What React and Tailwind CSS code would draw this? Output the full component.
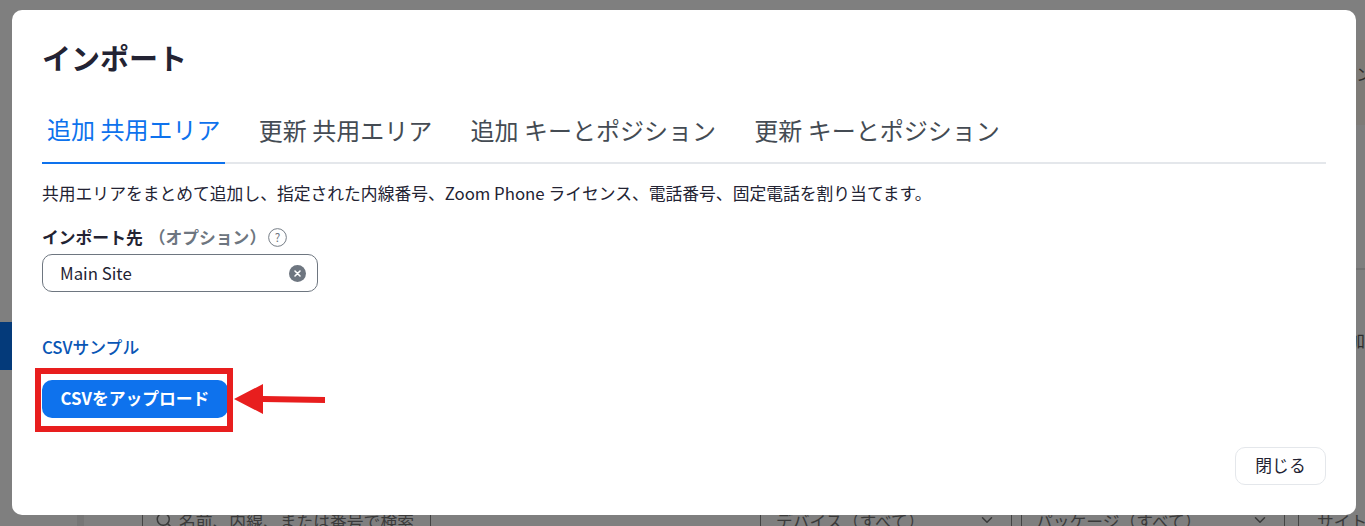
import React, { useState } from 'react';
import { Search, ChevronDown } from 'lucide-react';

const font = "font-['Noto_Sans_CJK_JP','Noto_Sans',sans-serif]";
const tabs = ['追加 共用エリア', '更新 共用エリア', '追加 キーとポジション', '更新 キーとポジション'];

// page behind the dialog, only its edges stay visible
const BackgroundPage = () => (
  <div className="flex flex-col h-full text-[#2e2e2e] text-[16.8px]">
    <div className="h-[40px]" />
    <div className="h-[85px] w-[9px] self-end bg-[#7e7b77] flex items-center pb-[18px]">
      <span className="leading-[24px] whitespace-nowrap">ン</span>
    </div>
    <div className="h-[143px]" />
    <div className="h-[2px] w-[9px] self-end bg-[#727272]" />
    <div className="h-[52px]" />
    <div className="flex h-[48px]">
      <div className="w-[12px] bg-[#043a7a]" />
      <div className="flex-1 flex justify-end items-center pb-[12px]">
        <span className="leading-[24px]">加</span>
      </div>
    </div>
    <div className="flex-1 flex items-end pl-[77px] overflow-hidden text-[#3a3a3a]">
      <div className="w-[7px] h-[11px] bg-[#767676] shrink-0" />
      <div className="ml-[58px] w-[289px] h-[26px] shrink-0 border-x border-[#444] pl-[12px] flex gap-[6px] self-end">
        <Search size={18} className="shrink-0 mt-[11px]" />
        <span className="mt-[9px] leading-[24px] whitespace-nowrap">名前、内線、または番号で検索</span>
      </div>
      <div className="ml-[329px] w-[252px] h-[26px] shrink-0 border-x border-[#444] pl-[15px] pr-[15px] flex justify-between">
        <span className="mt-[9px] leading-[24px] whitespace-nowrap">デバイス（すべて）</span>
        <ChevronDown size={18} className="mt-[11px]" />
      </div>
      <div className="ml-[9px] w-[264px] h-[26px] shrink-0 border-x border-[#444] pl-[14px] pr-[15px] flex justify-between">
        <span className="mt-[9px] leading-[24px] whitespace-nowrap">パッケージ（すべて）</span>
        <ChevronDown size={18} className="mt-[11px]" />
      </div>
      <div className="ml-[13px] h-[26px] shrink-0 border-l border-[#444] pl-[18px]">
        <span className="block mt-[9px] leading-[24px] whitespace-nowrap">サイト</span>
      </div>
    </div>
  </div>
);

export default function App() {
  const [active, setActive] = useState(0);
  const [site, setSite] = useState('Main Site');

  return (
    <div className={`relative h-[526px] w-full overflow-hidden bg-[#7f7f7f] ${font}`}>
      <BackgroundPage />

      <div className="absolute left-[12px] top-[10px] w-[1344px] h-[505px] rounded-[10px] bg-white flex flex-col px-[30px]">
        <h1 className="mt-[27px] text-[29px] leading-[40px] font-bold text-[#232333]">インポート</h1>

        <div className="mt-[24px] flex border-b-2 border-[#e4e7eb] gap-[28.4px] h-[63px]">
          {tabs.map((t, i) => (
            <button
              key={t}
              onClick={() => setActive(i)}
              className={`px-[5px] -mb-[2px] h-[63px] text-[24px] leading-[36px] pb-[6px] whitespace-nowrap ${
                i === active ? 'text-[#0e72ed] border-b-2 border-[#0e72ed]' : 'text-[#444b53]'
              }`}
            >
              {t}
            </button>
          ))}
        </div>

        <p className="mt-[17px] text-[16.8px] leading-[24px] text-[#232333] whitespace-nowrap">
          共用エリアをまとめて追加し、指定された内線番号、Zoom Phone ライセンス、電話番号、固定電話を割り当てます。
        </p>

        <div className="mt-[20px] flex items-center text-[16.8px] leading-[24px] font-bold text-[#232333]">
          インポート先
          <span className="ml-[6px] text-[#6e7680]">（オプション）</span>
          <svg width="19" height="19" viewBox="0 0 18 18" className="ml-[2px]" fill="none">
            <circle cx="9" cy="9" r="8.4" stroke="#6e7680" strokeWidth="0.9" />
            <text x="9" y="13" textAnchor="middle" fontSize="11" fontWeight="400" fill="#6e7680">?</text>
          </svg>
        </div>

        <div className="mt-[5px] flex items-center justify-between w-[276px] h-[38px] rounded-[10px] border border-[#6e7680] pl-[17px] pr-[11px]">
          <input
            value={site}
            onChange={e => setSite(e.target.value)}
            className="w-[200px] pt-[1px] bg-transparent outline-none text-[16.8px] text-[#232333]"
          />
          <button onClick={() => setSite('')} className="w-[17px] h-[17px] rounded-full bg-[#6e7680] flex items-center justify-center">
            <svg width="9" height="9" viewBox="0 0 9 9">
              <path d="M2 2l5 5M7 2L2 7" stroke="white" strokeWidth="1.6" strokeLinecap="round" />
            </svg>
          </button>
        </div>

        <a href="#" className="mt-[43px] text-[16.8px] leading-[24px] font-medium text-[#0956b5] w-fit">CSVサンプル</a>

        <button className="relative mt-[21px] w-[186px] h-[38px] rounded-[10px] bg-[#0e72ed] text-white text-[16.8px] font-bold">
          CSVをアップロード
          <span className="absolute -left-[7px] -top-[12px] w-[198px] h-[64px] border-[6px] border-[#e81e1e]" />
        </button>

        <div className="mt-[29px] flex justify-end">
          <button className="w-[91px] h-[38px] rounded-[10px] border border-[#e4e7eb] bg-white text-[16.8px] text-[#232333]">閉じる</button>
        </div>
      </div>

      <svg className="absolute left-[233px] top-[382px]" width="94" height="34" viewBox="0 0 94 34">
        <path d="M1 17L30 2v12l62 1v6l-62-1v12z" fill="#e81e1e" />
      </svg>
    </div>
  );
}
